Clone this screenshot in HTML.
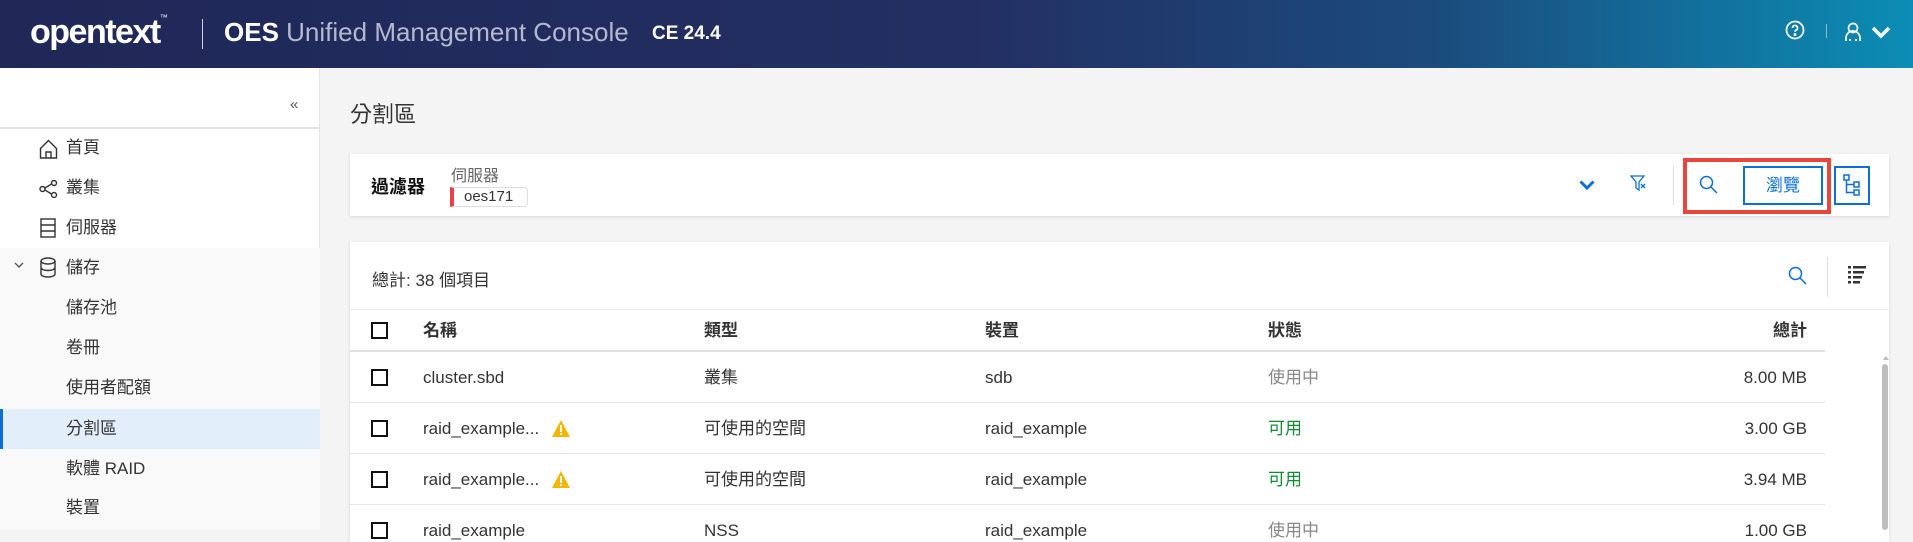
<!DOCTYPE html>
<html><head><meta charset="utf-8"><style>
*{box-sizing:border-box;margin:0;padding:0}
body{width:1913px;height:530px;overflow:hidden;background:#f4f4f4;font-family:"Liberation Sans","Noto Sans CJK TC",sans-serif;color:#333;position:relative}
.hdr{position:absolute;left:0;top:0;width:1913px;height:68px;background:linear-gradient(90deg,#1f2857 0%,#232e62 50%,#1b4b7d 75%,#0b8db5 100%);color:#fff}
.abs{position:absolute}
.side{position:absolute;left:0;top:68px;width:320px;height:462px;background:#fff;border-right:1px solid #e6e6e6}
.mi{position:absolute;left:66px;font-size:17px;color:#333;line-height:20px}
.card{position:absolute;background:#fff;box-shadow:0 1px 3px rgba(0,0,0,.12)}
.cb{position:absolute;left:371px;width:17px;height:17px;border:2px solid #111}
.rowline{position:absolute;left:350px;width:1475px;height:1px;background:#e5e5e5}
.cell{position:absolute;font-size:17px;line-height:20px;color:#333}
</style></head><body>
<div class="hdr">
 <div class="abs" style="left:30px;top:13px;font-size:34px;font-weight:bold;letter-spacing:-1.5px">opentext<span style="font-size:8px;vertical-align:top;font-weight:normal;letter-spacing:0">™</span></div>
 <div class="abs" style="left:202px;top:19px;width:1px;height:30px;background:#cfd3e0"></div>
 <div class="abs" style="left:224px;top:17px;font-size:26px;font-weight:bold;font-family:'Liberation Sans Narrow','Liberation Sans',sans-serif"><span>OES</span> <span style="color:#b4b9d0;font-weight:normal">Unified Management Console</span></div>
 <div class="abs" style="left:652px;top:23px;font-size:19px;font-weight:bold;font-family:'Liberation Sans Narrow','Liberation Sans',sans-serif">CE 24.4</div>
 <svg class="abs" style="left:1785px;top:20px" width="20" height="20" viewBox="0 0 20 20" fill="none" stroke="#fff" stroke-width="1.7"><circle cx="10" cy="10" r="8.5"/><path d="M7.5 8a2.5 2.5 0 1 1 3.3 2.3c-.6.3-.8.7-.8 1.4"/><circle cx="10" cy="14.5" r=".6" fill="#fff"/></svg>
 <div class="abs" style="left:1826px;top:24px;width:1px;height:14px;background:#8fb7cc"></div>
 <svg class="abs" style="left:1844px;top:22px" width="18" height="20" viewBox="0 0 18 20" fill="none" stroke="#fff" stroke-width="1.7"><circle cx="9" cy="6" r="4.5"/><path d="M2 19v-3a7 7 0 0 1 14 0v3M6 19v-2M12 19v-2"/></svg>
 <svg class="abs" style="left:1871px;top:26px" width="20" height="13" viewBox="0 0 20 13" fill="none" stroke="#fff" stroke-width="3.5"><path d="M2 2l8 8 8-8"/></svg>
</div>
<div class="side">
 <div class="abs" style="left:290px;top:28px;font-size:15px;color:#555">«</div>
 <div class="abs" style="left:0;top:59px;width:320px;height:2px;background:#e2e2e2"></div>
</div>
<svg class="abs" style="left:39px;top:139px" width="19" height="20" viewBox="0 0 19 20" fill="none" stroke="#333" stroke-width="1.4"><path d="M1.5 9.5L9.5 1.5l8 8V19h-16z"/><path d="M7 19v-6h5v6"/></svg>
<div class="mi" style="top:138px">首頁</div>
<svg class="abs" style="left:39px;top:180px" width="19" height="18" viewBox="0 0 19 18" fill="none" stroke="#333" stroke-width="1.4"><circle cx="3.5" cy="9" r="2.5"/><circle cx="15" cy="3" r="2.5"/><circle cx="15" cy="15" r="2.5"/><path d="M6 8l6.5-4M6 10l6.5 4"/></svg>
<div class="mi" style="top:178px">叢集</div>
<svg class="abs" style="left:40px;top:218px" width="16" height="20" viewBox="0 0 16 20" fill="none" stroke="#333" stroke-width="1.4"><rect x="1" y="1" width="14" height="18"/><path d="M1 7h14M1 13h14"/></svg>
<div class="mi" style="top:218px">伺服器</div>
<div class="abs" style="left:0;top:248px;width:320px;height:282px;background:#f9f9f9"></div>
<svg class="abs" style="left:14px;top:262px" width="10" height="7" viewBox="0 0 10 7" fill="none" stroke="#555" stroke-width="1.4"><path d="M1 1l4 4 4-4"/></svg>
<svg class="abs" style="left:40px;top:257px" width="16" height="21" viewBox="0 0 16 21" fill="none" stroke="#333" stroke-width="1.4"><ellipse cx="8" cy="4" rx="7" ry="3"/><path d="M1 4v13c0 1.7 3 3 7 3s7-1.3 7-3V4M1 10.5c0 1.7 3 3 7 3s7-1.3 7-3"/></svg>
<div class="mi" style="top:258px">儲存</div>
<div class="mi" style="top:298px">儲存池</div>
<div class="mi" style="top:338px">卷冊</div>
<div class="mi" style="top:378px">使用者配額</div>
<div class="abs" style="left:0;top:409px;width:320px;height:40px;background:#e2eefa"></div>
<div class="abs" style="left:0;top:409px;width:3px;height:40px;background:#0a6fd8"></div>
<div class="mi" style="top:419px">分割區</div>
<div class="mi" style="top:459px">軟體 RAID</div>
<div class="mi" style="top:498px">裝置</div>

<div class="abs" style="left:350px;top:97px;font-size:22px;color:#333">分割區</div>

<div class="card" style="left:350px;top:154px;width:1539px;height:62px"></div>
<div class="abs" style="left:371px;top:173px;font-size:18px;font-weight:bold;color:#111">過濾器</div>
<div class="abs" style="left:451px;top:162px;font-size:16px;color:#666">伺服器</div>
<div class="abs" style="left:450px;top:187px;width:78px;height:20px;border:1px solid #ddd;border-left:4px solid #e8414a;border-radius:0 4px 4px 0;font-size:15px;color:#333;padding-left:10px;line-height:18px">oes171</div>
<svg class="abs" style="left:1579px;top:180px" width="16" height="11" viewBox="0 0 16 11" fill="none" stroke="#0a6fd8" stroke-width="3"><path d="M1.5 1.5l6.5 6.5 6.5-6.5"/></svg>
<svg class="abs" style="left:1630px;top:175px" width="16" height="17" viewBox="0 0 16 17" fill="none" stroke="#0a6fd8" stroke-width="1.3"><path d="M1 1h13l-5 6v8l-3-2V7z"/><path d="M11 9l4 4M15 9l-4 4"/></svg>
<div class="abs" style="left:1673px;top:165px;width:1px;height:40px;background:#ddd"></div>
<div class="abs" style="left:1683px;top:158px;width:148px;height:56px;border:4px solid #e8453c"></div>
<svg class="abs" style="left:1699px;top:175px" width="19" height="19" viewBox="0 0 19 19" fill="none" stroke="#0a6fd8" stroke-width="1.5"><circle cx="7.5" cy="7.5" r="6"/><path d="M12 12l6 6"/></svg>
<div class="abs" style="left:1743px;top:166px;width:80px;height:39px;border:2px solid #0a6fd8;color:#0a6fd8;font-size:17px;text-align:center;line-height:35px">瀏覽</div>
<div class="abs" style="left:1834px;top:166px;width:36px;height:39px;border:2px solid #0a6fd8"></div>
<svg class="abs" style="left:1843px;top:174px" width="18" height="22" viewBox="0 0 18 22" fill="none" stroke="#0a6fd8" stroke-width="1.5"><rect x="1" y="1" width="5" height="5"/><rect x="11" y="8" width="5" height="5"/><rect x="11" y="16" width="5" height="5"/><path d="M3.5 6v12.5H11M3.5 10.5H11"/></svg>

<div class="card" style="left:350px;top:242px;width:1539px;height:300px"></div>
<div class="abs" style="left:372px;top:266px;font-size:17px;color:#333">總計: 38 個項目</div>
<svg class="abs" style="left:1788px;top:266px" width="19" height="19" viewBox="0 0 19 19" fill="none" stroke="#0a6fd8" stroke-width="1.5"><circle cx="7.5" cy="7.5" r="6"/><path d="M12 12l6 6"/></svg>
<div class="abs" style="left:1827px;top:257px;width:1px;height:40px;background:#ddd"></div>
<svg class="abs" style="left:1848px;top:266px" width="18" height="18" viewBox="0 0 18 18" fill="#333"><rect x="0" y="0" width="3" height="2.5"/><rect x="5" y="0" width="13" height="2.5"/><rect x="0" y="5" width="3" height="2.5"/><rect x="5" y="5" width="11" height="2.5"/><rect x="0" y="10" width="3" height="2.5"/><rect x="5" y="10" width="9" height="2.5"/><rect x="0" y="15" width="3" height="2.5"/><rect x="5" y="15" width="7" height="2.5"/></svg>
<div class="rowline" style="top:309px;width:1539px;background:#ececec"></div>
<div class="rowline" style="top:350px;height:2px;background:#e0e0e0"></div>
<div class="cb" style="top:322px"></div>
<div class="cell" style="left:423px;top:321px;font-weight:bold">名稱</div>
<div class="cell" style="left:704px;top:321px;font-weight:bold">類型</div>
<div class="cell" style="left:985px;top:321px;font-weight:bold">裝置</div>
<div class="cell" style="left:1268px;top:321px;font-weight:bold">狀態</div>
<div class="cell" style="left:1707px;width:100px;text-align:right;top:321px;font-weight:bold">總計</div>

<div class="cb" style="top:369px"></div>
<div class="cell" style="left:423px;top:368px">cluster.sbd</div>
<div class="cell" style="left:704px;top:368px">叢集</div>
<div class="cell" style="left:985px;top:368px">sdb</div>
<div class="cell" style="left:1268px;top:368px;color:#888">使用中</div>
<div class="cell" style="left:1707px;width:100px;text-align:right;top:368px">8.00 MB</div>
<div class="rowline" style="top:402px"></div>

<div class="cb" style="top:420px"></div>
<div class="cell" style="left:423px;top:419px">raid_example...</div>
<svg class="abs" style="left:552px;top:420px" width="18" height="17" viewBox="0 0 18 17"><path d="M9 0L18 17H0z" fill="#f6b600"/><rect x="8" y="5" width="2" height="7" fill="#fff"/><rect x="8" y="13" width="2" height="2" fill="#fff"/></svg>
<div class="cell" style="left:704px;top:419px">可使用的空間</div>
<div class="cell" style="left:985px;top:419px">raid_example</div>
<div class="cell" style="left:1268px;top:419px;color:#138a36">可用</div>
<div class="cell" style="left:1707px;width:100px;text-align:right;top:419px">3.00 GB</div>
<div class="rowline" style="top:453px"></div>

<div class="cb" style="top:471px"></div>
<div class="cell" style="left:423px;top:470px">raid_example...</div>
<svg class="abs" style="left:552px;top:471px" width="18" height="17" viewBox="0 0 18 17"><path d="M9 0L18 17H0z" fill="#f6b600"/><rect x="8" y="5" width="2" height="7" fill="#fff"/><rect x="8" y="13" width="2" height="2" fill="#fff"/></svg>
<div class="cell" style="left:704px;top:470px">可使用的空間</div>
<div class="cell" style="left:985px;top:470px">raid_example</div>
<div class="cell" style="left:1268px;top:470px;color:#138a36">可用</div>
<div class="cell" style="left:1707px;width:100px;text-align:right;top:470px">3.94 MB</div>
<div class="rowline" style="top:504px"></div>

<div class="cb" style="top:522px"></div>
<div class="cell" style="left:423px;top:521px">raid_example</div>
<div class="cell" style="left:704px;top:521px">NSS</div>
<div class="cell" style="left:985px;top:521px">raid_example</div>
<div class="cell" style="left:1268px;top:521px;color:#888">使用中</div>
<div class="cell" style="left:1707px;width:100px;text-align:right;top:521px">1.00 GB</div>

<div class="abs" style="left:1883px;top:356px;width:0;height:0;border-left:3px solid transparent;border-right:3px solid transparent;border-bottom:4px solid #bbb"></div>
<div class="abs" style="left:1882px;top:364px;width:6px;height:166px;background:#bdbdbd;border-radius:3px"></div>
</body></html>
